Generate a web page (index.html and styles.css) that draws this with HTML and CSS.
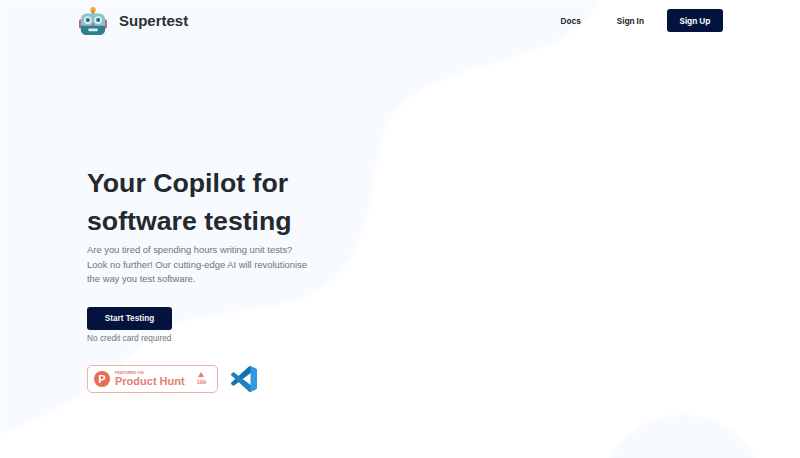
FILE: index.html
```html
<!DOCTYPE html>
<html lang="en">
<head>
<meta charset="utf-8">
<title>Supertest</title>
<link rel="stylesheet" href="styles.css">
</head>
<body>
<svg class="bg" viewBox="0 0 800 458" preserveAspectRatio="none" aria-hidden="true">
  <path class="blob" d="M0 0H600C588 22 566 40 530 52C480 68 425 78 398 108C372 138 378 175 368 212C358 250 345 278 306 296C270 312 210 310 170 326C130 345 110 395 0 433Z"/>
  <circle class="blob" cx="683" cy="498" r="83"/>
</svg>
<div class="page">
  <header class="nav">
    <a class="brand">
      <svg class="robot" viewBox="0 0 30 32" aria-hidden="true">
        <circle cx="15" cy="4" r="3" fill="#f2a93b"/>
        <rect x="13.5" y="5" width="3" height="4" fill="#c98a2e"/>
        <rect x="0" y="14" width="4" height="10" rx="2" fill="#c0656e"/>
        <rect x="26" y="14" width="4" height="10" rx="2" fill="#c0656e"/>
        <rect x="2" y="8" width="26" height="23" rx="6" fill="#8cc2ce"/>
        <path d="M2 21H28V25C28 28.5 25 31 22 31H8C5 31 2 28.5 2 25Z" fill="#2f7f8c"/>
        <circle cx="9.5" cy="15" r="4.2" fill="#d5f0f5"/>
        <circle cx="20.500" cy="15" r="4.2" fill="#d5f0f5"/>
        <circle cx="9.5" cy="15" r="2.2" fill="#2b6f7c"/>
        <circle cx="20.500" cy="15" r="2.200" fill="#2b6f7c"/>
        <path d="M15 17L13 21H17Z" fill="#c0656e"/>
        <rect x="10" y="24" width="10" height="3" rx="1" fill="#d5f0f5"/>
      </svg>
      <span class="brand-name">Supertest</span>
    </a>
    <nav class="links">
      <a class="link">Docs</a>
      <a class="link">Sign In</a>
      <a class="btn btn-nav">Sign Up</a>
    </nav>
  </header>
  <main class="hero">
    <h1 class="title">Your Copilot for<br>software testing</h1>
    <p class="lead">Are you tired of spending hours writing unit tests?<br>Look no further! Our cutting-edge AI will revolutionise<br>the way you test software.</p>
    <a class="btn btn-cta">Start Testing</a>
    <p class="note">No credit card required</p>
    <div class="badges">
      <div class="ph">
        <span class="ph-logo">P</span>
        <span class="ph-text"><span class="ph-small">FEATURED ON</span><span class="ph-name">Product Hunt</span></span>
        <span class="ph-votes"><span class="ph-arrow"></span><span class="ph-count">199</span></span>
      </div>
      <svg class="vscode" viewBox="0 0 100 100" aria-hidden="true">
        <path fill="#1a6fae" d="M96.500 10.800 75.900.9a6.200 6.200 0 0 0-7.100 1.200L1.400 63.600a4.200 4.200 0 0 0 0 6.200l5.500 5a4.200 4.200 0 0 0 5.300.2L93.400 13.400a4.100 4.100 0 0 1 6.600 3.300v-.2a6.200 6.200 0 0 0-3.500-5.700Z"/>
        <path fill="#1f82c6" d="m96.500 89.200-20.600 9.900a6.200 6.200 0 0 1-7.100-1.200L1.400 36.400a4.200 4.200 0 0 1 0-6.200l5.500-5a4.200 4.200 0 0 1 5.300-.2l81.200 61.600a4.100 4.100 0 0 0 6.600-3.300v.2a6.200 6.200 0 0 1-3.500 5.700Z"/>
        <path fill="#2f9ade" d="M75.900 99.100a6.200 6.200 0 0 1-7.100-1.200c2.300 2.300 6.200.7 6.200-2.600V4.700c0-3.300-3.900-4.900-6.200-2.600a6.200 6.200 0 0 1 7.100-1.200l20.600 9.900a6.200 6.200 0 0 1 3.500 5.600v67.200a6.200 6.200 0 0 1-3.500 5.600Z"/>
      </svg>
    </div>
  </main>
</div>
</body>
</html>
```
FILE: styles.css
```css
* { box-sizing: border-box; }
html, body { margin: 0; height: 100%; }
body {
  background: #fff;
  font-family: "Liberation Sans", Arial, sans-serif;
  color: #212529;
  overflow: hidden;
}
.bg { position: absolute; inset: 0; width: 100%; height: 100%; z-index: -1; }
.blob { fill: #f7fafe; filter: blur(1.5px); }
.page { padding: 0 77px 0 79px; }
.nav {
  display: flex;
  align-items: center;
  justify-content: space-between;
  height: 41px;
}
.brand { display: flex; align-items: center; gap: 12px; }
.robot { width: 28px; height: 30px; display: block; }
.brand-name { font-size: 15px; font-weight: 700; color: #2b3035; }
.links { display: flex; align-items: center; }
.link {
  font-size: 8.200px;
  font-weight: 700;
  color: #2b3035;
  margin-right: 36px;
  font-family: Inter, "Liberation Sans", sans-serif;
}
.link + .link { margin-right: 23px; }
.btn {
  display: flex;
  align-items: center;
  justify-content: center;
  background: #04133e;
  color: #f4f6fa;
  font-weight: 700;
  border-radius: 3px;
}
.btn-nav { width: 56px; height: 23px; font-size: 8.200px; font-family: Inter, "Liberation Sans", sans-serif; }
.hero { padding: 123px 0 0 8px; }
.title { margin: 0; font-size: 26.700px; line-height: 38px; font-weight: 700; color: #25292e; }
.lead { margin: 3px 0 0; font-size: 9.400px; line-height: 14.500px; color: #6c757d; }
.btn-cta { width: 85px; height: 23px; margin-top: 20px; font-size: 8.200px; }
.note { margin: 2px 0 0; font-size: 8.300px; line-height: 12px; color: #6c757d; }
.badges { display: flex; align-items: center; gap: 13px; margin-top: 21px; }
.ph {
  display: flex;
  align-items: center;
  width: 131px;
  height: 28px;
  padding: 0 11px 0 6px;
  background: #fff;
  border: 1px solid #f0b0a5;
  border-radius: 5px;
  color: #e0806f;
}
.ph-logo {
  width: 16px; height: 16px;
  border-radius: 50%;
  background: #ea6a55;
  color: #fff;
  font-size: 11px;
  font-weight: 700;
  display: flex; align-items: center; justify-content: center;
}
.ph-text { display: flex; flex-direction: column; margin-left: 5px; flex: 1; }
.ph-small { font-size: 4px; line-height: 5px; font-weight: 700; }
.ph-name { font-size: 11px; line-height: 12px; font-weight: 700; }
.ph-votes { display: flex; flex-direction: column; align-items: center; gap: 2px; }
.ph-arrow { width: 0; height: 0; border: 3px solid transparent; border-top: 0; border-bottom: 5px solid #e0806f; }
.ph-count { font-size: 5.500px; font-weight: 700; line-height: 6px; }
.vscode { width: 26px; height: 26px; display: block; }
```
